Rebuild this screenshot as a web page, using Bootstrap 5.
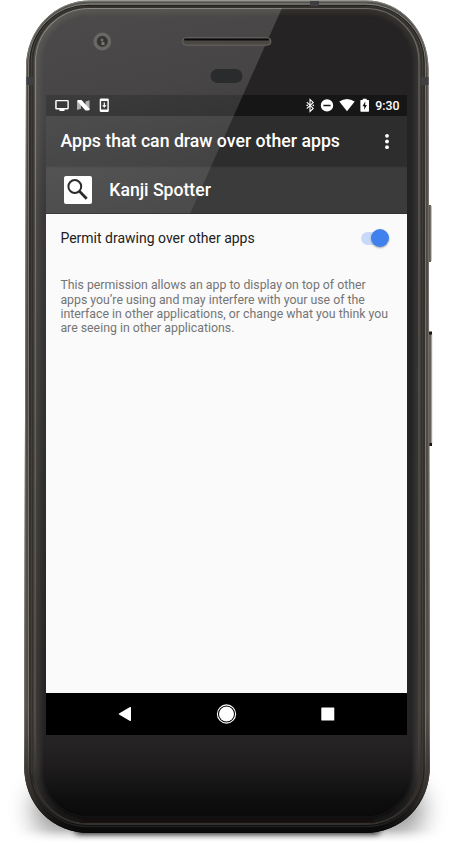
<!DOCTYPE html>
<html lang="en">
<head>
<meta charset="utf-8">
<meta name="viewport" content="width=device-width, initial-scale=1">
<title>Apps that can draw over other apps</title>
<link href="https://cdn.jsdelivr.net/npm/bootstrap@5.3.0/dist/css/bootstrap.min.css" rel="stylesheet">
<style>
body{background:#fff;font-family:Roboto,"Noto Sans",sans-serif;line-height:1}
.phone{width:457px;height:845px;padding:95px 50.5px 110px 46px}
.art{left:0;top:0;width:457px;height:845px;pointer-events:none}
.screen{width:360.5px;height:640px;background:#fafafa}
.statusbar{height:21px;background:#161616;padding:0 7px 0 8px}
.clock{font-size:12.3px;font-weight:500;padding-top:1px}
.titlebar{height:50px;background:#2d2d2d;padding:1px 15px 0 14.4px}
.titlebar h1{font-size:17.7px;font-weight:500;line-height:1;padding-top:1px}
.appbar{height:47.5px;background:#3b3b3b;padding-left:18px;box-shadow:inset 0 2px 2px -1px #303030,inset 0 -1px #303030}
.appbar h2{font-size:17.6px;font-weight:500;line-height:1;padding:2px 0 0 17.3px}
.appicon{width:28px;height:28px;border-radius:2px}
.setting{height:48px;padding:1px 18.5px 0 14.4px;color:#212121;font-size:14px}
.about{padding:16.7px 0 0 14.4px;color:#757575;font-size:12.32px;line-height:14.4px}
.track{width:27px;height:13px;border-radius:7px;background:#c8daf9}
.thumb{width:18px;height:18px;border-radius:9px;background:#4181ee;right:-1px;top:-3px;box-shadow:0 1px 2px rgba(0,0,0,.35)}
.navkeys{height:42px;background:#000}
</style>
</head>
<body>
<main class="phone position-relative overflow-hidden">
<svg class="art position-absolute" viewBox="0 0 457 845" aria-hidden="true">
<defs>
<linearGradient id="metal" x2="0" y2="1"><stop offset="0" stop-color="#55534f"/><stop offset=".12" stop-color="#4b4742"/><stop offset=".85" stop-color="#544f49"/><stop offset=".95" stop-color="#35312e"/><stop offset="1" stop-color="#090909"/></linearGradient>
<linearGradient id="ring" x2="0" y2="1"><stop offset="0" stop-color="#85857f"/><stop offset=".1" stop-color="#74726b"/><stop offset=".88" stop-color="#78716b"/><stop offset=".97" stop-color="#1c1a18"/><stop offset="1" stop-color="#070707"/></linearGradient>
<linearGradient id="rim" x2="0" y2="1"><stop offset="0" stop-color="#6c6c68"/><stop offset=".9" stop-color="#4a4846"/><stop offset="1" stop-color="#171615"/></linearGradient>
<linearGradient id="glass" x2="0" y2="1"><stop offset="0" stop-color="#252323"/><stop offset=".9" stop-color="#252324"/><stop offset=".935" stop-color="#1d1b1c"/><stop offset=".975" stop-color="#0d0d0d"/><stop offset="1" stop-color="#0b0b0b"/></linearGradient>
<linearGradient id="inner" x2="0" y2="1"><stop offset="0" stop-color="#34322f"/><stop offset=".93" stop-color="#383634"/><stop offset="1" stop-color="#121111"/></linearGradient>
<filter id="soft" x="-20%" y="-200%" width="140%" height="500%"><feGaussianBlur stdDeviation="3"/></filter>
<filter id="haze" x="-30%" y="-100%" width="160%" height="300%"><feGaussianBlur stdDeviation="13"/></filter>
<filter id="edge" x="-5%" y="-5%" width="110%" height="110%"><feGaussianBlur stdDeviation="2"/></filter>
<linearGradient id="fade" x2="0" y2="1"><stop offset="0" stop-color="#fff"/><stop offset=".9" stop-color="#fff"/><stop offset="1" stop-color="#000"/></linearGradient>
<mask id="floor" maskUnits="userSpaceOnUse" x="0" y="720" width="457" height="122"><rect y="720" width="457" height="122" fill="url(#fade)"/></mask>
<clipPath id="pane"><rect x="35" y="8" width="384.500" height="815" rx="54"/></clipPath>
</defs>
<g mask="url(#floor)"><rect x="34" y="785" width="388" height="50" rx="20" fill="#000" opacity=".42" filter="url(#haze)"/></g>
<rect x="75" y="826" width="305" height="8" rx="4" fill="#000" opacity=".85" filter="url(#soft)"/>
<path d="M428 205h3v57h-3z" fill="#5b5751"/><path d="M430.500 206h1v55h-1z" fill="#8b8680"/>
<path d="M427 332h5v114h-5z" fill="#65605a"/><path d="M431 334h1.200v110h-1.200z" fill="#a19e99"/><path d="M428 331.500h4v3h-4zM428 443h4v3h-4z" fill="#161514"/>
<path d="M90 .5H366C401 .5 428 30 428.500 68L430 765C430 805 402 833 364 833H90C52 833 24 805 24 765L26 68C26 30 54 .5 90 .5z" fill="url(#metal)"/>
<path d="M90 1H366C401 1 427.500 30 428 68L429.500 765C429.500 805 402 832.500 364 832.500H90C52 832.500 24.500 805 24.500 765L26.500 68C26.500 30 54 1 90 1z" fill="none" stroke="url(#ring)"/>
<rect x="28.500" y="4" width="397" height="825" rx="60" fill="none" stroke="url(#ring)"/>
<rect x="30" y="5.500" width="394" height="821" rx="58" fill="none" stroke="#22201e" stroke-width="1.200"/>
<rect x="32.500" y="7" width="389" height="817" rx="56" fill="none" stroke="#33302d" stroke-width="2"/>
<rect x="35" y="8" width="384.500" height="815" rx="54" fill="url(#glass)"/>
<g clip-path="url(#pane)">
<rect x="36" y="9" width="382.500" height="813" rx="53" fill="none" stroke="url(#inner)" stroke-width="9" filter="url(#edge)"/>
</g>
<rect x="35.500" y="8.500" width="383.500" height="814" rx="53.500" fill="none" stroke="url(#rim)" stroke-width="1.200"/>
<path d="M26.500 77h7v8h-7zM421 77h7.500v8H421zM310 1h9v5h-9z" fill="#3f3f42"/>
<path d="M29.500 773l3 2 2 10-3-4z" fill="#292725"/>
</svg>
<section class="screen position-relative d-flex flex-column">
<div class="statusbar d-flex align-items-center justify-content-between text-white">
<svg width="60" height="21" viewBox="54 95 60 21" fill="#fff" aria-hidden="true">
<path d="M56.500 99.900h11q1.300 0 1.300 1.300v7q0 1.300-1.300 1.300h-3v1.500h-5v-1.500h-3q-1.300 0-1.300-1.300v-7q0-1.300 1.300-1.300zm.2 1.400v6.800h10.700v-6.800z"/>
<path d="M77 100.500l4 3.200v5.100l-4 1.200zM89.500 110l-4-3v-5.500l4-1.200z" opacity=".6"/><path d="M77.500 100h4l8.500 9.200-1.500 1.300h-3l-8-9z"/>
<path fill-rule="evenodd" d="M101 98.500h6.500q1.300 0 1.300 1.300v11q0 1.300-1.300 1.300H101q-1.300 0-1.300-1.300v-11q0-1.300 1.300-1.300zm.1 2.600v8.400h6.300v-8.400zm2.600 1.400h1.200v2.700h1.700l-2.300 2.600-2.300-2.600h1.700z"/>
</svg>
<div class="d-flex align-items-center">
<svg width="66" height="21" viewBox="305 95 66 21" fill="#fff" aria-hidden="true">
<path d="M306.800 102.200l6.400 6.200-3.200 3v-12l3.200 3-6.400 6.200" fill="none" stroke="#fff" stroke-width="1.100"/>
<circle cx="307.200" cy="105.400" r=".8"/><circle cx="313.300" cy="105.400" r=".8"/>
<path fill-rule="evenodd" d="M327 99.200a6.200 6.200 0 1 1 0 12.400 6.200 6.200 0 0 1 0-12.400zm-3.600 5.500v1.500h7.200v-1.500z"/>
<path d="M339.300 101.500q7.700-5 15.400 0L347 111.200z"/>
<path fill-rule="evenodd" d="M361 100h1.700v-1.200h4V100h1.700q.6 0 .6.600v10.500q0 .6-.6.600H361q-.6 0-.6-.6v-10.500q0-.6.600-.6zm4.200 1.500l-2.700 4.700h1.700v3.500l2.700-4.800h-1.700z"/>
</svg>
<span class="clock ms-1">9:30</span>
</div>
</div>
<header class="titlebar d-flex align-items-center justify-content-between text-white">
<h1 class="m-0 text-nowrap">Apps that can draw over other apps</h1>
<svg width="10" height="20" viewBox="0 0 10 20" fill="#fff" role="img" aria-label="More options"><circle cx="5" cy="3.800" r="1.900"/><circle cx="5" cy="9.500" r="1.900"/><circle cx="5" cy="15.200" r="1.900"/></svg>
</header>
<div class="appbar d-flex align-items-center text-white">
<div class="appicon bg-white flex-shrink-0"><svg class="d-block" width="28" height="28" viewBox="0 0 28 28" fill="none" stroke="#111" aria-hidden="true"><circle cx="10.800" cy="10.500" r="6.400" stroke-width="2"/><path d="M15.200 15l7.500 7.800" stroke-width="2.700"/></svg></div>
<h2 class="m-0">Kanji Spotter</h2>
</div>
<div class="setting d-flex align-items-center justify-content-between">
<span>Permit drawing over other apps</span>
<span class="track position-relative" role="switch" aria-checked="true"><span class="thumb position-absolute"></span></span>
</div>
<p class="about m-0 text-nowrap">This permission allows an app to display on top of other<br>apps you’re using and may interfere with your use of the<br>interface in other applications, or change what you think you<br>are seeing in other applications.</p>
<nav class="navkeys mt-auto" aria-label="Navigation keys">
<svg class="d-block" width="360" height="42" viewBox="46 693 360 42" fill="#fff" aria-hidden="true"><path d="M119 713.500l11-6.400q1-.4 1 .6v12.600q0 1-1 .6l-11-6.400q-.7-.5 0-1z"/><circle cx="226.500" cy="714" r="7.500"/><circle cx="226.500" cy="714" r="9.100" fill="none" stroke="#fff" stroke-width="1.100"/><rect x="321.300" y="707.400" width="13" height="13.200" rx=".7"/></svg>
</nav>
</section>
<svg class="art position-absolute" viewBox="0 0 457 845" aria-hidden="true">
<defs><linearGradient id="glare" gradientUnits="userSpaceOnUse" x1="100" y1="0" x2="150" y2="214"><stop offset="0" stop-color="#fff" stop-opacity=".18"/><stop offset=".45" stop-color="#fff" stop-opacity=".155"/><stop offset="1" stop-color="#fff" stop-opacity=".085"/></linearGradient>
<linearGradient id="side" gradientUnits="userSpaceOnUse" x1="0" y1="213" x2="0" y2="735"><stop offset="0" stop-color="#fff" stop-opacity=".1"/><stop offset="1" stop-color="#fff" stop-opacity="0"/></linearGradient></defs>
<path d="M35 213.500h11V735H35z" fill="url(#side)"/>
<path d="M89 8H282L190 213.500H35V62C35 32 59 8 89 8z" fill="url(#glare)"/>
<rect x="182.500" y="37.800" width="88.500" height="7.400" rx="3.700" fill="#4b4843" stroke="#6a6762"/><path d="M185 39.500h83" stroke="#0c0b0b" stroke-width="2" stroke-linecap="round"/>
<rect x="210.500" y="69" width="32" height="14" rx="7" fill="#2a2b2d"/>
<circle cx="102.300" cy="41.500" r="7.300" fill="#4a4847" stroke="#6a6865" stroke-width="3.200"/><circle cx="102.300" cy="41.300" r="5" fill="#353332"/><circle cx="102" cy="40" r="1.500" fill="#716e6b"/><path d="M101.500 42h3v3h-3z" fill="#7a7774"/>
</svg>
</main>
<script src="https://cdn.jsdelivr.net/npm/bootstrap@5.3.0/dist/js/bootstrap.bundle.min.js"></script>
</body>
</html>
